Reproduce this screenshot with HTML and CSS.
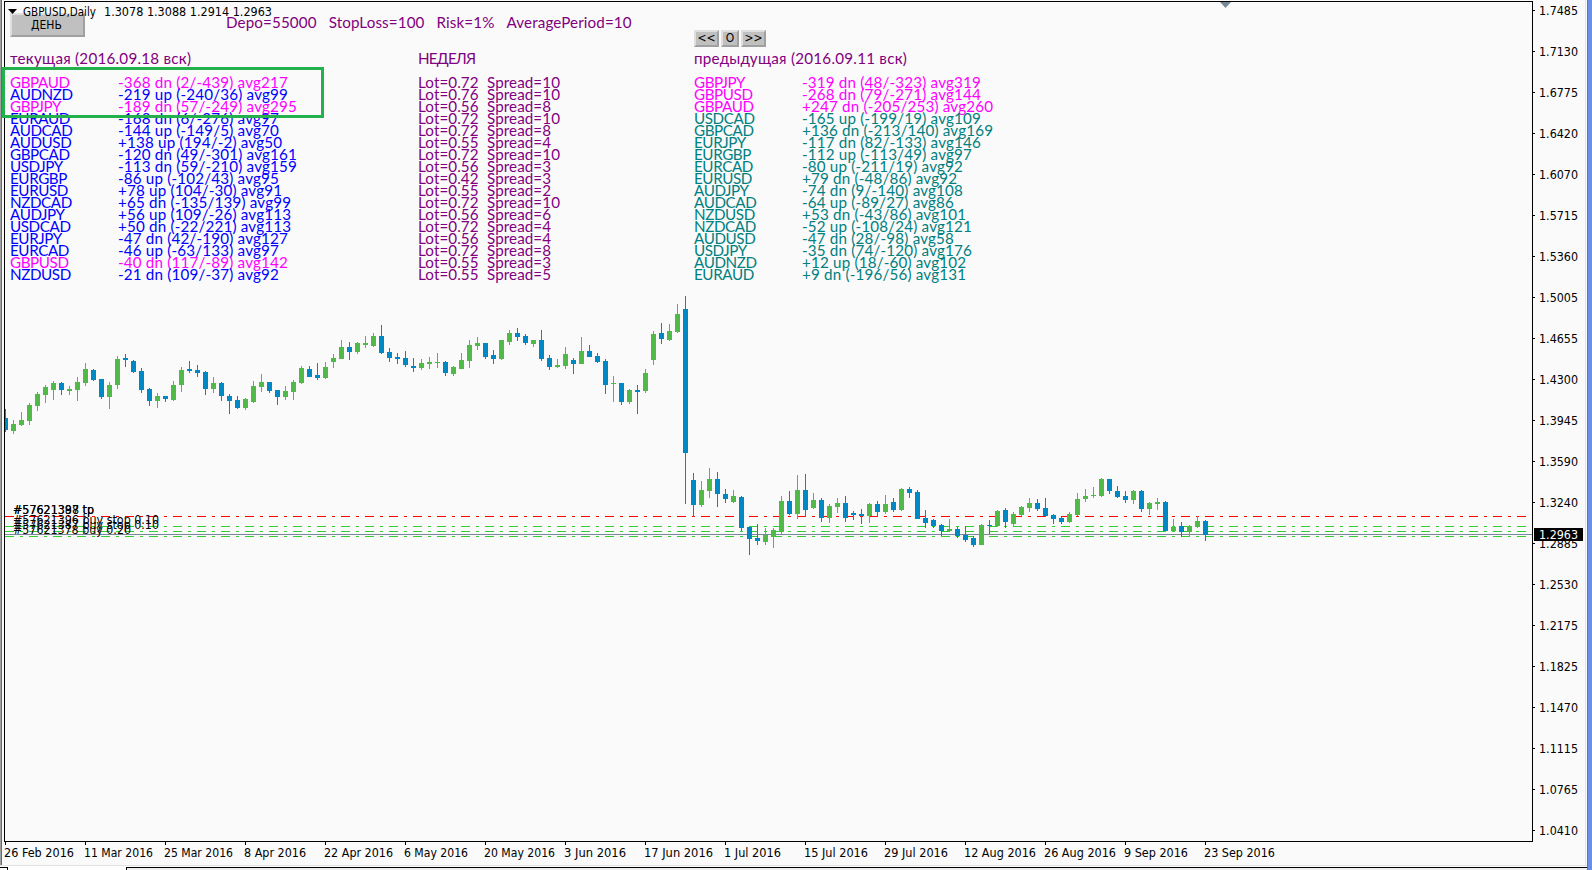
FILE: index.html
```html
<!DOCTYPE html>
<html lang="ru">
<head>
<meta charset="utf-8">
<title>GBPUSD,Daily</title>
<link rel="stylesheet" href="styles.css">
</head>
<body>
<div class="window">
  <svg class="chart" id="chart" width="1592" height="870" viewBox="0 0 1592 870"></svg>
  <div class="panel">
    <header class="top">
      <div class="button day">ДЕНЬ</div>
      <div class="settings"><span>Depo=55000</span><span>StopLoss=100</span><span>Risk=1%</span><span>AveragePeriod=10</span></div>
    </header>
    <div class="columns">
      <section class="current"><h2>текущая (2016.09.18 вск)</h2><div class="rows" id="current"></div></section>
      <section class="lots"><h2 class="week">НЕДЕЛЯ</h2><div class="rows" id="lots"></div></section>
      <section class="previous">
        <nav class="pager"><div class="button">&lt;&lt;</div><div class="button mid">O</div><div class="button">&gt;&gt;</div></nav>
        <h2>предыдущая (2016.09.11 вск)</h2><div class="rows" id="previous"></div>
      </section>
    </div>
  </div>
  <div class="highlight"></div>
  <svg class="chart title" width="400" height="22"><path d="M8 9h9l-4.5 5z"/><text x="23" y="16" textLength="73" lengthAdjust="spacingAndGlyphs">GBPUSD,Daily</text><text x="104" y="16" textLength="168" lengthAdjust="spacingAndGlyphs">1.3078 1.3088 1.2914 1.2963</text></svg>
</div>
<script src="chart.js"></script>
</body>
</html>
```
FILE: styles.css
```css
body { margin: 0; background: #fafafa; overflow: hidden; }
.window { position: relative; width: 1592px; height: 870px; overflow: hidden; }
.chart { position: absolute; left: 0; top: 0; display: block; }
.chart text { font-family: "DejaVu Sans Condensed", "DejaVu Sans", sans-serif; font-stretch: condensed; font-size: 12px; fill: #000; white-space: pre; }
.chart .inverse { fill: #fff; }
.panel { position: relative; width: 1100px; padding: 13px 0 0 10px; box-sizing: border-box; font: 15.2px/20px Lato, "Open Sans", sans-serif; color: #800080; }
.top { display: flex; height: 35px; }
.button { box-sizing: border-box; background: #c0c0c0; border: 2px solid; border-color: #dfdfdf #a0a0a0 #a0a0a0 #dfdfdf; color: #000; font: 12px/13px "DejaVu Sans Condensed", "DejaVu Sans", sans-serif; font-stretch: condensed; text-align: center; width: 25px; height: 17px; }
.day { width: 75px; height: 24px; line-height: 20px; padding-right: 2px; }
.settings { display: flex; gap: 12px; margin-left: 141px; margin-top: -1px; height: 20px; white-space: nowrap; letter-spacing: 0.12px; }
.columns { display: flex; height: 235px; }
.current { width: 408px; }
.lots { width: 276px; }
.previous { width: 380px; }
h2 { margin: 0; font-size: 15.2px; font-weight: 400; line-height: 20px; white-space: nowrap; letter-spacing: 0.24px; }
.week { letter-spacing: -0.8px; }
.rows { margin-top: 8px; letter-spacing: 0.18px; }
.lots .rows { letter-spacing: 0.08px; }
.row { display: flex; height: 12px; line-height: 12px; white-space: pre; }
.pair { width: 108px; letter-spacing: -0.4px; }
.lot { width: 69px; }
.blue { color: #0000ff; }
.magenta { color: #ff00ff; }
.teal { color: #008080; }
.pager { display: flex; gap: 2px; height: 17px; margin-top: -19px; margin-bottom: 2px; position: relative; top: 1px; }
.mid { width: 18px; }
.highlight { position: absolute; left: 2px; top: 67px; width: 322px; height: 51px; box-sizing: border-box; border: 3px solid #22b14c; }
```
FILE: chart.js
```js
const svg = document.getElementById('chart');
function add(name, attrs, text) {
  const el = document.createElementNS('http://www.w3.org/2000/svg', name);
  for (const key in attrs) el.setAttribute(key, attrs[key]);
  if (text) el.textContent = text;
  svg.appendChild(el);
}
function rect(x, y, width, height, fill) {
  add('rect', { x, y, width, height, fill, 'shape-rendering': 'crispEdges' });
}
function label(x, y, text, length, cls) {
  const attrs = { x, y };
  if (length) { attrs.textLength = length; attrs.lengthAdjust = 'spacingAndGlyphs'; }
  if (cls) attrs.class = cls;
  add('text', attrs, text);
}

// Window edges
rect(0, 0, 1, 866, '#a0a0a0');
rect(1, 0, 1, 866, '#696969');
rect(2, 0, 2, 866, '#fafafa');
rect(1585, 0, 1, 866, '#e3e3e3');
rect(1587, 0, 5, 870, '#6890e8');
rect(1587, 0, 1, 870, '#5878c0');
rect(0, 865, 1587, 1, '#e3e3e3');
rect(0, 866, 1587, 4, '#ffffff');
rect(126, 867, 1461, 1, '#000');
rect(126, 867, 1, 3, '#000');
rect(127, 868, 1460, 2, '#f0f0f0');
rect(0, 867, 8, 1, '#000');
rect(7, 867, 1, 3, '#000');

// Price levels
function dashes(y, color) {
  for (let x = 5; x < 1532; x += 24) {
    rect(x, y, Math.min(9, 1532 - x), 1, color);
    if (x + 15 < 1532) rect(x + 15, y, 3, 1, color);
  }
}
dashes(516, '#ff0000');
[526, 531, 536].forEach(y => dashes(y, '#32cd32'));
rect(5, 534, 1528, 1, '#778899');

// Candles: direction, high, body top, body bottom, low in thirds of a pixel
const early = `b357,384,420,426 g390,402,423,432 g366,390,405,408 g339,345,393,405 g306,312,348,363 g285,291,315,339 g273,279,300,330 b276,279,300,315 g288,297,303,315 g261,276,300,333
g219,237,279,288 b237,240,270,273 b267,267,321,327 g276,285,321,357 g198,207,285,297 b192,204,210,231 b210,213,246,249 b234,243,300,309 b294,297,333,348 g309,318,333,354
b318,318,327,336 g273,285,330,333 g231,240,285,306 b213,237,243,249 b225,240,249,261 b243,246,297,315 g261,279,297,309 b276,279,318,333 b312,318,333,372 b318,330,354,357
g324,327,354,360 g273,288,336,339 g252,276,291,306 b276,276,303,309 b300,300,321,345 g288,303,321,330 g270,276,306,330 g228,234,279,282 b228,237,261,261 b219,255,264,270
g216,231,264,267 g192,204,216,234 g150,171,207,207 b156,171,186,210 g156,159,186,192 g138,159,165,174 g129,138,168,171 b105,138,189,192 b174,186,204,216 b189,201,207,222
b183,204,225,231 b204,228,234,246 g207,219,234,240 g201,216,222,237 g189,216,219,234 b213,216,249,258 g228,231,252,258 g189,210,237,237 g150,165,213,234 g141,159,168,180
b159,159,201,207 b180,195,207,222 g150,150,207,210 g120,129,156,165 b114,129,141,153 b132,138,159,165 g150,150,162,171 b120,150,207,213 b195,204,231,240 g207,225,231,234
g171,192,228,237 b204,210,222,252 g141,183,222,222 b165,183,201,201 b189,198,216,219 b207,213,285,312 g258,279,282,336 b279,279,336,345 g297,300,336,342 b285,300,306,372
g237,249,303,309 g123,132,210,225 b99,129,147,162 g102,123,150,153 g42,72,126,129 b18,57,489,642 b549,570,645,681 g573,600,645,651 g534,567,603,624 b546,567,612,651
b597,612,627,639 g600,618,636,639 b618,621,714,723 b711,711,747,795 b702,744,753,765 g714,735,756,765 g714,720,741,774 g618,633,726,732 b603,633,672,675 g555,600,672,687 b552,600,660,681`;
const late = `g129,150,174,177 b144,150,204,216 g162,168,204,219 g144,159,171,189 b138,159,204,216 b183,189,195,210 b177,192,198,222 g159,162,198,219 b153,162,186,201
g135,162,186,192 b144,156,180,186 g114,117,180,183 b111,117,129,144 b120,126,207,207 b180,204,219,234 b207,210,228,234 b222,225,243,258 g207,237,243,246 b231,237,258,264
b228,255,270,276 b258,264,285,291 g222,225,285,285 b210,225,228,252 g180,183,228,228 b174,180,216,234 g186,192,222,228 g168,171,195,198 g144,159,174,186 b147,159,177,183
b144,174,198,201 b192,195,207,222 b201,204,216,222 g186,192,216,219 g129,147,195,198 g117,138,147,156 g111,135,138,144 g84,87,138,141 b87,87,123,132 b108,123,141,144
b123,138,150,159 g120,123,150,162 b120,123,177,186 g156,159,177,195 g144,156,162,180 b153,156,243,243 g207,231,243,246 b216,228,246,261 g225,228,246,261 g198,213,231,234 b210,213,255,273`;
let index = 0;
function candles(data, base) {
  data.split(/\s+/).forEach(item => {
    const color = item[0] === 'g' ? '#50b948' : '#0088c4';
    const [high, top, bottom, low] = item.slice(1).split(',').map(v => base + Math.round(v / 3));
    const x = 5 + 8 * index++;
    rect(x, high, 1, low - high, color);
    const left = Math.max(5, x - 2);
    rect(left, top, x + 3 - left, bottom - top, color);
  });
}
candles(early, 290);
candles(late, 450);

// Frame and axes
rect(4, 1, 1529, 1, '#000');
rect(4, 1, 1, 841, '#000');
rect(1532, 1, 1, 841, '#000');
rect(4, 841, 1529, 1, '#000');
'1.7485 1.7130 1.6775 1.6420 1.6070 1.5715 1.5360 1.5005 1.4655 1.4300 1.3945 1.3590 1.3240 1.2885 1.2530 1.2175 1.1825 1.1470 1.1115 1.0765 1.0410'.split(' ').forEach((price, i) => {
  rect(1533, 10 + 41 * i, 2, 1, '#000');
  label(1539, 15 + 41 * i, price, 39);
});
rect(1534, 528, 49, 13, '#000');
label(1539, 539, '1.2963', 39, 'inverse');
[['26 Feb 2016', 70], ['11 Mar 2016', 69], ['25 Mar 2016', 69], ['8 Apr 2016', 62], ['22 Apr 2016', 69], ['6 May 2016', 64], ['20 May 2016', 71], ['3 Jun 2016', 62], ['17 Jun 2016', 69], ['1 Jul 2016', 57], ['15 Jul 2016', 64], ['29 Jul 2016', 64], ['12 Aug 2016', 72], ['26 Aug 2016', 72], ['9 Sep 2016', 64], ['23 Sep 2016', 71]].forEach(([date, length], i) => {
  rect(5 + 80 * i, 842, 1, 3, '#000');
  label(4 + 80 * i, 857, date, length);
});

// Order captions
label(13, 514, '#57621398 tp', 81);
label(13, 514, '#57621387 tp', 81);
label(13, 524, '#57621396 buy stop 0.10', 146);
label(13, 529, '#57621387 buy stop 0.10', 146);
label(13, 534, '#57621378 buy 0.20', 118);
add('path', { d: 'M1220 2h11l-5.5 6z', fill: '#778899' });

// Statistics tables
function fill(id, lines, colorOf) {
  document.getElementById(id).innerHTML = lines.map((line, i) => {
    const cut = line.indexOf(' ');
    return `<div class="row ${colorOf(line, i)}"><span class="${id === 'lots' ? 'lot' : 'pair'}">${line.slice(0, cut)}</span><span>${line.slice(cut + 1)}</span></div>`;
  }).join('');
}
fill('current', `GBPAUD -368 dn (2/-439) avg217
AUDNZD -219 up (-240/36) avg99
GBPJPY -189 dn (57/-249) avg295
EURAUD -168 dn (6/-276) avg97
AUDCAD -144 up (-149/5) avg70
AUDUSD +138 up (194/-2) avg50
GBPCAD -120 dn (49/-301) avg161
USDJPY -113 dn (59/-210) avg159
EURGBP -86 up (-102/43) avg95
EURUSD +78 up (104/-30) avg91
NZDCAD +65 dn (-135/139) avg99
AUDJPY +56 up (109/-26) avg113
USDCAD +50 dn (-22/221) avg113
EURJPY -47 dn (42/-190) avg127
EURCAD -46 up (-63/133) avg97
GBPUSD -40 dn (117/-89) avg142
NZDUSD -21 dn (109/-37) avg92`.split('\n'), (line, i) => [0, 2, 15].includes(i) ? 'magenta' : 'blue');
fill('previous', `GBPJPY -319 dn (48/-323) avg319
GBPUSD -268 dn (79/-271) avg144
GBPAUD +247 dn (-205/253) avg260
USDCAD -165 up (-199/19) avg109
GBPCAD +136 dn (-213/140) avg169
EURJPY -117 dn (82/-133) avg146
EURGBP -112 up (-113/49) avg97
EURCAD -80 up (-211/19) avg92
EURUSD +79 dn (-48/86) avg92
AUDJPY -74 dn (9/-140) avg108
AUDCAD -64 up (-89/27) avg86
NZDUSD +53 dn (-43/86) avg101
NZDCAD -52 up (-108/24) avg121
AUDUSD -47 dn (28/-98) avg58
USDJPY -35 dn (74/-120) avg176
AUDNZD +12 up (18/-60) avg102
EURAUD +9 dn (-196/56) avg131`.split('\n'), (line, i) => i < 3 ? 'magenta' : 'teal');
fill('lots', '72,10 76,10 56,8 72,10 72,8 55,4 72,10 56,3 42,3 55,2 72,10 56,6 72,4 56,4 72,8 55,3 55,5'.split(' ').map(item => {
  const [lot, spread] = item.split(',');
  return `Lot=0.${lot} Spread=${spread}`;
}), () => '');
```
